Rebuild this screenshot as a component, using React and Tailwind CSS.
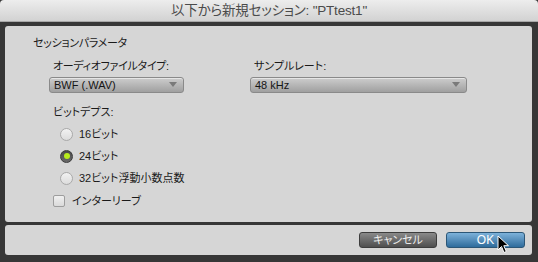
// App.jsx — Pro Tools style "new session" dialog
const font = { fontFamily: '"Liberation Sans", "Noto Sans CJK JP", sans-serif' };

function Select({ value, width }) {
  return (
    <div
      className={`relative flex items-center h-[16px] ${width} rounded-[3px] border border-[#8a8a8a] bg-gradient-to-b from-[#cdcdcd] to-[#a0a0a0] shadow-[inset_0_1px_0_rgba(255,255,255,0.5)] pl-[4px]`}
    >
      <span className="text-[11px] leading-none text-[#151515]">{value}</span>
      <svg className="absolute right-[6px] top-[4px]" width="8" height="5" viewBox="0 0 8 5">
        <path d="M0 0 H8 L4 5 Z" fill="#7a7a7a" />
      </svg>
    </div>
  );
}

function Radio({ label, checked }) {
  return (
    <div className="flex items-center h-[22px] pl-[11px]">
      {checked ? (
        <span className="flex items-center justify-center w-[13px] h-[13px] rounded-full bg-gradient-to-b from-[#4a4a4a] to-[#6a6a6a] border border-[#3a3a3a]">
          <span className="w-[6px] h-[6px] rounded-full bg-[#b8ec1c]" />
        </span>
      ) : (
        <span className="w-[13px] h-[13px] rounded-full border border-[#a9a9a9] bg-gradient-to-b from-[#f2f2f2] to-[#dcdcdc]" />
      )}
      <span className="ml-[6px] text-[11px] leading-none text-[#1a1a1a]">{label}</span>
    </div>
  );
}

export default function App() {
  return (
    <div
      className="relative w-[538px] h-[262px] bg-[#373737] flex flex-col overflow-hidden [font-feature-settings:'palt']"
      style={font}
    >
      {/* title bar */}
      <div className="h-[22px] flex items-center justify-center bg-gradient-to-b from-[#ededed] to-[#d2d2d2] border-b border-[#a8a8a8] rounded-t-[4px]">
        <span className="text-[13.5px] leading-none text-[#4b4b4b] tracking-[-0.2px]">以下から新規セッション: "PTtest1"</span>
      </div>

      {/* upper panel */}
      <div className="mt-[4px] ml-[5px] mr-[6px] h-[196px] rounded-[3px] bg-[#d6d6d6] pt-[10px] pl-[28px]">
        <div className="h-[14px] text-[11px] leading-[14px] text-[#1a1a1a] tracking-[-0.3px]">セッションパラメータ</div>

        <div className="flex mt-[9px] pl-[16px]">
          <div className="flex flex-col w-[201px]">
            <div className="h-[14px] pl-[4px] text-[11px] leading-[14px] text-[#1a1a1a] tracking-[-0.3px]">オーディオファイルタイプ:</div>
            <div className="mt-[4px]">
              <Select value="BWF (.WAV)" width="w-[135px]" />
            </div>
          </div>
          <div className="flex flex-col">
            <div className="h-[14px] pl-[4px] text-[11px] leading-[14px] text-[#1a1a1a]">サンプルレート:</div>
            <div className="mt-[4px]">
              <Select value="48 kHz" width="w-[217px]" />
            </div>
          </div>
        </div>

        <div className="mt-[12px] pl-[20px] h-[14px] text-[11px] leading-[14px] text-[#1a1a1a]">ビットデプス:</div>

        <div className="mt-[4px] pl-[16px]">
          <Radio label="16ビット" />
          <Radio label="24ビット" checked />
          <Radio label="32ビット浮動小数点数" />
          <div className="flex items-center h-[22px] mt-[1px] pl-[4px]">
            <span className="w-[12px] h-[12px] rounded-[2px] border border-[#9d9d9d] bg-gradient-to-b from-[#f0f0f0] to-[#dadada]" />
            <span className="ml-[7px] text-[11px] leading-none text-[#1a1a1a]">インターリーブ</span>
          </div>
        </div>
      </div>

      {/* lower panel */}
      <div className="mt-[3px] ml-[5px] mr-[6px] h-[30px] rounded-[3px] bg-[#d6d6d6] flex justify-end items-start pt-[7px] pr-[7px] gap-[9px]">
        <button className="w-[78px] h-[16px] rounded-[3px] border border-[#3d3d3d] bg-gradient-to-b from-[#8a8a8a] to-[#4f4f4f] text-[11px] leading-none text-[#eeeeee]">
          キャンセル
        </button>
        <button className="w-[79px] h-[16px] rounded-[3px] border border-[#2b5677] bg-gradient-to-b from-[#7db2da] to-[#2e6c9c] text-[12px] leading-none text-white">
          OK
        </button>
      </div>

      {/* mouse pointer */}
      <svg className="absolute left-[497px] top-[235px]" width="14" height="20" viewBox="0 0 14 20">
        <path d="M1 1 L1 15 L4.5 11.5 L7 17.5 L9.3 16.5 L6.8 10.7 L11.5 10.7 Z" fill="#000" stroke="#fff" strokeWidth="1" strokeLinejoin="round" />
      </svg>
    </div>
  );
}
